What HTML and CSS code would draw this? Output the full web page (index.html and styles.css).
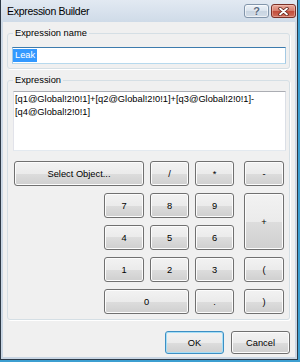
FILE: index.html
```html
<!DOCTYPE html>
<html lang="en">
<head>
    <meta name="viewport" content="width=device-width, initial-scale=1">
    <title>Expression Builder</title>
    <link rel="stylesheet" href="styles.css">
</head>
<body>
    <div class="window">
        <div class="titlebar">
            <span class="title">Expression Builder</span>
            <div class="caption-btns">
                <button class="cap help">?</button>
                <button class="cap close">
                    <svg width="11" height="9" viewBox="0 0 11 9">
                        <path d="M2 1.5 L9 7.5 M9 1.5 L2 7.5" stroke="#5b2019" stroke-width="3.4" stroke-linecap="round"/>
                        <path d="M2 1.5 L9 7.5 M9 1.5 L2 7.5" stroke="#fff" stroke-width="1.8" stroke-linecap="round"/>
                    </svg>
                </button>
            </div>
        </div>
        <div class="client">
            <fieldset class="group name-group">
                <legend>Expression name</legend>
                <div class="textbox name-box"><span class="sel">Leak</span></div>
            </fieldset>
            <fieldset class="group expr-group">
                <legend>Expression</legend>
                <div class="textbox expr">[q1@Global!2!0!1]+[q2@Global!2!0!1]+[q3@Global!2!0!1]-<br>[q4@Global!2!0!1]</div>
                <div class="keypad">
                    <div class="pad">
                        <button class="btn select">Select Object...</button>
                        <button class="btn">/</button>
                        <button class="btn">*</button>
                        <button class="btn first">7</button>
                        <button class="btn">8</button>
                        <button class="btn">9</button>
                        <button class="btn first">4</button>
                        <button class="btn">5</button>
                        <button class="btn">6</button>
                        <button class="btn first">1</button>
                        <button class="btn">2</button>
                        <button class="btn">3</button>
                        <button class="btn zero">0</button>
                        <button class="btn">.</button>
                    </div>
                    <div class="ops">
                        <button class="btn">-</button>
                        <button class="btn plus">+</button>
                        <button class="btn">(</button>
                        <button class="btn">)</button>
                    </div>
                </div>
            </fieldset>
            <div class="actions">
                <button class="btn default">OK</button>
                <button class="btn">Cancel</button>
            </div>
        </div>
    </div>
</body>
</html>
```

FILE: styles.css
```css
* {
    box-sizing: border-box;
}
html, body {
    margin: 0;
    padding: 0;
}
body {
    background: #3c9fd1;
    font-family: "Liberation Sans", Arial, sans-serif;
    font-size: 9.3px;
    color: #000;
}
.window {
    width: 298px;
    height: 360px;
    display: flex;
    flex-direction: column;
    background: linear-gradient(#e2e9f2, #cfdbe8 22px, #c9d6e4);
    border: 1px solid #2e3a47;
    border-top: none;
}
.titlebar {
    height: 22px;
    display: flex;
    align-items: flex-start;
    padding: 0 1px 0 6px;
}
.title {
    font-size: 10.5px;
    line-height: 22px;
    letter-spacing: -0.3px;
}
.caption-btns {
    margin-left: auto;
    margin-top: 4px;
    display: flex;
    gap: 2px;
}
.cap {
    width: 25px;
    height: 14px;
    padding: 0;
    border-radius: 3px;
    display: flex;
    align-items: center;
    justify-content: center;
}
.help {
    border: 1px solid #8295aa;
    background: linear-gradient(#edf2f8, #dae3ed 50%, #c8d4e1 50%, #d3dde8);
    box-shadow: inset 0 0 0 1px rgba(255, 255, 255, 0.6);
    font: bold 11px "Liberation Sans", Arial, sans-serif;
    line-height: 12px;
    color: #5c6b80;
    text-shadow: 0 0 2px #fff;
}
.close {
    border: 1px solid #7a3027;
    background: linear-gradient(#e8a99b, #d67d6d 50%, #c24b39 50%, #d06f5c);
    box-shadow: inset 0 0 0 1px rgba(255, 220, 210, 0.4);
}
.client {
    flex: 1;
    margin: 0 2px 2px;
    padding-left: 4px;
    background: #f0f0f0;
}
.group {
    width: 283px;
    margin: 6px 0 0;
    border: 1px solid #d5dfe5;
    border-radius: 3px;
    box-shadow: 1px 1px 0 #fff;
    min-inline-size: 0;
}
.group legend {
    padding: 0 2px;
    line-height: 10px;
}
.name-group {
    padding: 9px 3px 4px 4px;
}
.name-group legend {
    margin-left: 1px;
}
.expr-group {
    padding: 6px 3px 5px 5px;
}
.textbox {
    background: #fff;
    border: 1px solid;
    border-color: #abadb3 #dbdfe6 #e3e9ef #e2e3ea;
}
.name-box {
    height: 17px;
    padding-top: 1px;
    border-color: #3d7bad #a4c9e3 #b7d9ed #a4c9e3;
}
.sel {
    display: inline-block;
    padding: 0 2px;
    line-height: 13px;
    background: #3399ff;
    color: #fff;
}
.expr {
    height: 60px;
    padding: 1px 1px;
    line-height: 13px;
    white-space: nowrap;
}
.keypad {
    display: flex;
    gap: 10px;
    margin: 10px 0 0 1px;
}
.pad {
    display: grid;
    grid-template-columns: 84px 40px 39px 39px;
    grid-auto-rows: 25px;
    column-gap: 6px;
    row-gap: 7px;
}
.pad .select {
    grid-column: 1 / span 2;
}
.pad .first {
    grid-column-start: 2;
}
.pad .zero {
    grid-column: 2 / span 2;
}
.ops {
    display: grid;
    grid-template-columns: 40px;
    grid-auto-rows: 25px;
    row-gap: 7px;
}
.ops .plus {
    grid-row: span 2;
}
.btn {
    padding: 0;
    border: 1px solid #707070;
    border-radius: 3px;
    background: linear-gradient(#f2f2f2, #ebebeb 50%, #dddddd 50%, #cfcfcf);
    box-shadow: inset 0 0 0 1px #fcfcfc;
    font: inherit;
    color: #000;
}
.actions {
    display: flex;
    justify-content: flex-end;
    gap: 7px;
    margin: 11px 5px 0 0;
}
.actions .btn {
    width: 59px;
    height: 23px;
}
.actions .default {
    border-color: #3c8fc4;
    box-shadow: inset 0 0 0 1px #a6def6;
}
```
